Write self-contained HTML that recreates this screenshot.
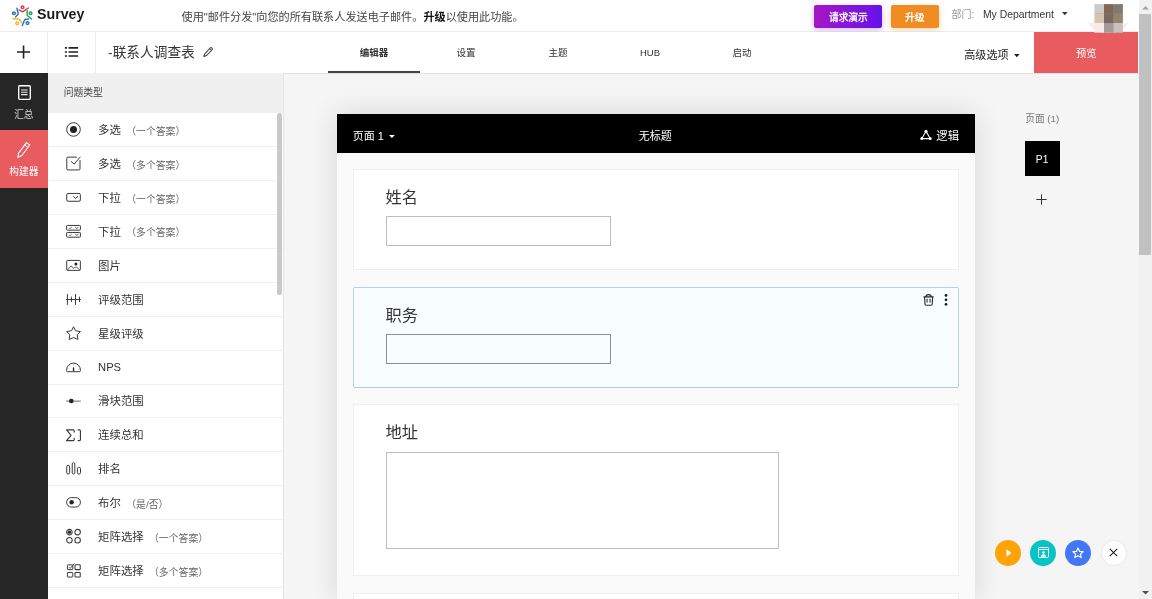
<!DOCTYPE html>
<html lang="zh-CN">
<head>
<meta charset="utf-8">
<title>Survey</title>
<style>
*{box-sizing:border-box;margin:0;padding:0}
html,body{width:1152px;height:599px;overflow:hidden;background:#fff}
body{will-change:transform;font-family:"Liberation Sans","Noto Sans CJK SC",sans-serif;font-size:11px;color:#333;position:relative}
.abs{position:absolute}
#top{left:0;top:0;width:1138.5px;height:31.5px;background:#fff;border-bottom:1px solid #ececec}
#brand{left:37.2px;top:5.3px;font-size:15.1px;font-weight:bold;color:#1a1a1a;line-height:18px;transform:scaleX(.94);transform-origin:0 0}
#promo{left:181.5px;top:8.7px;font-size:11.15px;color:#444;white-space:nowrap;line-height:16px}
#promo b{color:#111}
.btn{color:#fff;text-align:center;border-radius:2px;white-space:nowrap}
#demo{left:814.4px;top:4.6px;width:67.9px;-webkit-text-stroke:.3px #fff;height:23.5px;line-height:25.9px;font-size:9.7px;background:linear-gradient(90deg,#a617c5,#6513ea);box-shadow:0 2px 6px rgba(124,15,208,.3)}
#upg{left:890.5px;top:4.6px;width:48.6px;height:23.5px;line-height:25.9px;font-size:9.8px;background:#f08c22;font-weight:bold;box-shadow:0 2px 6px rgba(240,140,34,.35)}
#deptl{left:951.4px;top:7.1px;font-size:10px;color:#999;line-height:16px;white-space:nowrap}
#dept{left:982.9px;top:6.5px;font-size:10.4px;color:#333;line-height:16px;white-space:nowrap}
#bar2{left:0;top:32px;width:1138.5px;height:41.5px;background:#fff;border-bottom:1px solid #e2e2e2}
.vsep{top:32px;width:1px;height:41px;background:#ececec}
#title{left:108.1px;top:41.8px;font-size:13.7px;color:#333;line-height:22px;white-space:nowrap}
.tab{top:32px;width:92px;height:41px;line-height:41px;text-align:center;font-size:9.5px;color:#333}
.tab.on{font-weight:bold;border-bottom:2px solid #444}
#adv{left:964.2px;top:46.9px;font-size:11.1px;color:#222;line-height:16px;white-space:nowrap}
#prev{left:1034.4px;top:32px;width:103.8px;height:40.700px;line-height:43px;background:#e85c60;color:#fff;text-align:center;font-size:10.3px}
#side{left:0;top:73.300px;width:47.7px;height:526px;background:#262626}
#side .act{left:0;top:57px;width:47.7px;height:57.500px;background:#e85c60}
#side .lbl{width:47.7px;text-align:center;color:#fff;font-size:9.7px;line-height:12px}
#qt{left:47.7px;top:73.300px;width:236px;height:526px;background:#fff;border-right:1px solid #e4e4e4;overflow:hidden}
#qth{left:0;top:0;width:235px;height:39.500px;background:#f0f0f0;line-height:39px;padding-left:16px;font-size:9.8px;color:#444}
.qi{left:0;width:235px;height:33.91px;border-bottom:1px solid #efefef}
.qi .t{position:absolute;left:50.4px;top:8.9px;font-size:11.42px;line-height:16px;color:#333;white-space:nowrap}
.qi .t i{font-style:normal;font-size:9.87px;color:#666;margin-left:5.3px;position:relative;top:.5px}
.qi svg{position:absolute;left:18.300px;top:9.050px;overflow:visible}
#main{left:284px;top:74px;width:854.5px;height:525px;background:#f5f5f5}
#rp{left:1014px;top:74px;width:124.5px;height:525px;background:#f5f5f5}
#card{left:336.800px;top:113.900px;width:638.2px;height:486px;background:#fafafa;box-shadow:0 0 27px rgba(0,0,0,.125)}
#ch{left:0;top:0;width:638.2px;height:39px;background:#000;color:#fff;font-size:11px;line-height:38px;white-space:nowrap}
.q{left:16.200px;width:605.800px;background:#fff;border:1px solid #efefef}
.q .h{position:absolute;left:31.500px;font-size:16.200px;line-height:24px;color:#333}
.q .in{position:absolute;left:31.700px;border:1px solid #bdbdbd;background:#fff}
#sb{left:1138.5px;top:0;width:13.5px;height:599px;background:#f1f1f1}
#sb .th{left:.6px;top:13.800px;width:11.6px;height:241px;background:#c1c1c1}
.fab{width:26px;height:26px;border-radius:50%;top:539.800px}
</style>
</head>
<body>
<div id="top" class="abs"></div>
<svg class="abs" style="left:11px;top:3.500px" width="23" height="23" viewBox="0 0 23 23">
 <g fill="none" stroke-linecap="round" stroke-linejoin="round">
 <circle cx="11.520" cy="3.260" r="1.350" stroke="#e03c45" stroke-width="1.500"/>
 <path d="M8.120 5.760L11.520 7.770L17.280 4.010" stroke="#e03c45" stroke-width="1.450"/>
 <circle cx="19.530" cy="9.270" r="1.350" stroke="#22a355" stroke-width="1.500"/>
 <path d="M16.280 6.770Q15.600 9.800 16.280 11.520L20.540 15.030" stroke="#22a355" stroke-width="1.450"/>
 <circle cx="16.530" cy="19.030" r="1.350" stroke="#2f74c0" stroke-width="1.500"/>
 <path d="M17.530 15.030L13.780 15.530L11.270 21.540" stroke="#2f74c0" stroke-width="1.450"/>
 <circle cx="6.160" cy="19.280" r="1.350" stroke="#f5b82e" stroke-width="1.500"/>
 <path d="M2 14.780L8.270 15.280L10.520 18.530" stroke="#f5b82e" stroke-width="1.450"/>
 <circle cx="2.910" cy="9.270" r="1.350" stroke="#2f74c0" stroke-width="1.500"/>
 <path d="M5.910 4.260L7.270 10.020L4.510 13.020" stroke="#2f74c0" stroke-width="1.450"/>
 </g>
</svg>
<div id="brand" class="abs">Survey</div>
<div id="promo" class="abs">使用"邮件分发"向您的所有联系人发送电子邮件。<b>升级</b>以使用此功能。</div>
<div id="demo" class="abs btn">请求演示</div>
<div id="upg" class="abs btn">升级</div>
<div id="deptl" class="abs">部门:</div>
<div id="dept" class="abs">My Department</div>
<svg class="abs" style="left:1061.5px;top:12.200px" width="6" height="4" viewBox="0 0 6 4"><path d="M0 0h5.600L2.800 3.200z" fill="#333"/></svg>
<svg class="abs" style="left:1086px;top:0;z-index:5" width="46" height="34" viewBox="0 0 46 34">
 <path d="M2 23h40.400C38 30 32 32.700 22.200 32.700S6.500 30 2 23z" fill="#f9eded"/>
 <rect x="9.400" y="5.100" width="26.500" height="26.600" fill="#8f8279"/>
 <rect x="8.400" y="4.100" width="9.600" height="9.600" fill="#cdcbc8"/><rect x="18" y="4.100" width="9.400" height="9.600" fill="#836754"/><rect x="27.400" y="4.100" width="9.500" height="9.600" fill="#827972"/>
 <rect x="8.400" y="13.700" width="9.600" height="9.300" fill="#d4c4af"/><rect x="18" y="13.700" width="9.400" height="9.300" fill="#796960"/><rect x="27.400" y="13.700" width="9.500" height="9.300" fill="#958465"/>
 <rect x="8.400" y="23" width="9.600" height="9.700" fill="#f5ebea"/><rect x="18" y="23" width="9.400" height="9.700" fill="#a39a99"/><rect x="27.400" y="23" width="9.500" height="9.700" fill="#c9bfbf"/>
</svg>

<div id="bar2" class="abs"></div>
<div class="abs vsep" style="left:47.200px"></div>
<div class="abs vsep" style="left:95.300px"></div>
<svg class="abs" style="left:17px;top:45px" width="14" height="14" viewBox="0 0 14 14"><path d="M6.550 .4v13M0 6.950h13.100" stroke="#222" stroke-width="1.600" fill="none"/></svg>
<svg class="abs" style="left:64px;top:46px" width="15" height="12" viewBox="0 0 15 12"><path d="M4.550 1.900h9.550M4.550 6h9.550M4.550 10h9.550M.9 1.900h2.100M.9 6h2.100M.9 10h2.100" stroke="#222" stroke-width="1.650" fill="none"/></svg>
<div id="title" class="abs">-联系人调查表</div>
<svg class="abs" style="left:201px;top:45px" width="14" height="14" viewBox="0 0 14 14"><g transform="translate(6.950 7.200) rotate(43.500)" fill="none" stroke="#333" stroke-width=".95" stroke-linejoin="round"><path d="M-1.250 3.300V-4.800a.9.900 0 0 1 .9-.9h.7a.9.900 0 0 1 .9.900V3.300L0 5.900Z"/><path d="M-1.250 -3.700H1.250" stroke-width=".7"/></g></svg>
<div class="abs tab on" style="left:328px">编辑器</div>
<div class="abs tab" style="left:420px">设置</div>
<div class="abs tab" style="left:512px">主题</div>
<div class="abs tab" style="left:604px">HUB</div>
<div class="abs tab" style="left:696px">启动</div>
<div id="adv" class="abs">高级选项</div>
<svg class="abs" style="left:1014px;top:53.500px" width="6" height="4" viewBox="0 0 6 4"><path d="M0 0h5.600L2.800 3.200z" fill="#222"/></svg>
<div id="prev" class="abs">预览</div>

<div id="side" class="abs">
 <svg class="abs" style="left:17.600px;top:12px" width="13" height="15" viewBox="0 0 13 15"><rect x=".7" y=".7" width="11.600" height="13.600" rx="1" fill="none" stroke="#fff" stroke-width="1.350"/><path d="M3.050 5h6.550M3.050 7.300h6.550M3.050 9.600h6.550" stroke="#f0f0f0" stroke-width="1.050"/></svg>
 <div class="abs lbl" style="top:35.700px;color:#d6d6d6">汇总</div>
 <div class="abs act">
  <svg class="abs" style="left:13px;top:10px" width="20" height="20" viewBox="0 0 20 20"><g transform="translate(10 10.600) rotate(36.800)" fill="none" stroke="#fff" stroke-width="1.100" stroke-linejoin="round"><path d="M-2.050 4.600V-8.500h4.100V4.600L0 8.700Z"/><path d="M-2.050 -5.500H2.050" stroke-width=".9"/></g></svg>
  <div class="abs lbl" style="top:35.800px">构建器</div>
 </div>
</div>

<div id="qt" class="abs">
 <div id="qth" class="abs">问题类型</div>
<div class="abs qi" style="top:40.00px"><svg width="15" height="15" viewBox="0 0 15 15"><circle cx="7.5" cy="7.45" r="6.8" stroke="#3a3a3a" fill="none" stroke-width="1"/><circle cx="7.5" cy="7.500" r="3.500" fill="#222"/></svg><div class="t">多选<i>（一个答案）</i></div></div>
<div class="abs qi" style="top:73.91px"><svg width="15" height="15" viewBox="0 0 15 15"><path d="M10.800 1.150H2A1.200 1.200 0 0 0 .8 2.350V12.750a1.200 1.200 0 0 0 1.200 1.200H12.800a1.200 1.200 0 0 0 1.200-1.200V4.150" stroke="#3a3a3a" fill="none" stroke-width="1"/><path d="M5 5.350L8.200 8.150L14.400 .75" stroke="#3a3a3a" fill="none" stroke-width="1"/></svg><div class="t">多选<i>（多个答案）</i></div></div>
<div class="abs qi" style="top:107.82px"><svg width="15" height="15" viewBox="0 0 15 15"><rect x="0.730" y="3.440" width="13.620" height="7.810" rx="1.300" stroke="#3a3a3a" fill="none" stroke-width="1"/><path d="M7.220 6.170L9.540 8.450L12.030 6.170" stroke="#3a3a3a" fill="none" stroke-width="1"/></svg><div class="t">下拉<i>（一个答案）</i></div></div>
<div class="abs qi" style="top:141.73px"><svg width="15" height="15" viewBox="0 0 15 15"><rect x="0.600" y="1.450" width="13.830" height="4.700" rx=".7" stroke="#3a3a3a" fill="none" stroke-width="1"/><rect x="0.600" y="8.460" width="13.830" height="4.740" rx=".7" stroke="#3a3a3a" fill="none" stroke-width="1"/><path d="M3.200 4.050l.9.500L5.600 3.150M9.400 3.150l1.400 1.200 1.600-1M3.200 11.050l.9.500L5.600 10.150M9.400 10.150l1.400 1.200 1.600-1" stroke="#444" fill="none" stroke-width=".9"/></svg><div class="t">下拉<i>（多个答案）</i></div></div>
<div class="abs qi" style="top:175.64px"><svg width="15" height="15" viewBox="0 0 15 15"><rect x="0.730" y="2.420" width="13.620" height="9.940" rx=".8" stroke="#3a3a3a" fill="none" stroke-width="1"/><path d="M1.400 12.200C3 10.500 4 8.300 5 8S6.300 10 7 10.200S9.600 9 10.400 9.200S12.500 11 13.800 12.200" stroke="#3a3a3a" fill="none" stroke-width="0.9"/><circle cx="9.940" cy="5.950" r="1.500" fill="#222"/></svg><div class="t">图片</div></div>
<div class="abs qi" style="top:209.55px"><svg width="15" height="15" viewBox="0 0 15 15"><path d="M0 7.500h14.800M1.400 2.100v10.800M5.400 4.700v5.400M9.500 2.100v10.800M13.500 4.700v5.400" stroke="#3a3a3a" fill="none" stroke-width="1"/></svg><div class="t">评级范围</div></div>
<div class="abs qi" style="top:243.46px"><svg width="15" height="15" viewBox="0 0 15 15"><path d="M7.540 .8L9.500 4.700L14.430 5.600L11.200 8.700L11.830 13.420L7.540 11.500L3.210 13.420L3.850 8.700L.610 5.600L5.550 4.700Z" stroke="#3a3a3a" fill="none" stroke-width="1" stroke-linejoin="round"/></svg><div class="t">星级评级</div></div>
<div class="abs qi" style="top:277.37px"><svg width="15" height="15" viewBox="0 0 15 15"><path d="M1.600 11.700H13.400A1 1 0 0 0 14.400 10.700V10A6.900 6.900 0 0 0 .6 10V10.700A1 1 0 0 0 1.600 11.700Z" stroke="#3a3a3a" fill="none" stroke-width="1"/><path d="M7.540 7.400V11.200" stroke="#222" stroke-width="1.300" fill="none"/><path d="M7.540 4.300v.9M3.600 5.700l.7.600M11.400 5.700l-.7.600M2 9h.9M13 9h-.9" stroke="#999" stroke-width=".6" fill="none"/></svg><div class="t" style="top:8.4px;font-size:11.2px">NPS</div></div>
<div class="abs qi" style="top:311.28px"><svg width="15" height="15" viewBox="0 0 15 15"><path d="M0.200 7.100h14.600" stroke="#777" stroke-width="1.100" fill="none"/><circle cx="5.300" cy="7" r="2.300" fill="#222"/></svg><div class="t">滑块范围</div></div>
<div class="abs qi" style="top:345.19px"><svg width="15" height="15" viewBox="0 0 15 15"><path d="M8.220 4.600V2.900A1 1 0 0 0 7.200 1.870H.610L5.010 7.280L.610 12.690H7.200A1 1 0 0 0 8.220 11.700V10.100" stroke="#3a3a3a" fill="none" stroke-width="1.15" stroke-linejoin="round"/><path d="M11.630 1.870H13.400A1 1 0 0 1 14.430 2.900V11.700A1 1 0 0 1 13.400 12.690H11.630" stroke="#3a3a3a" fill="none" stroke-width="1.15"/></svg><div class="t">连续总和</div></div>
<div class="abs qi" style="top:379.10px"><svg width="15" height="15" viewBox="0 0 15 15"><rect x="0.730" y="4.360" width="2.880" height="8.620" rx="1.300" stroke="#3a3a3a" fill="none" stroke-width="1"/><rect x="6.220" y="1.760" width="2.600" height="11.220" rx="1.100" stroke="#3a3a3a" fill="none" stroke-width="1"/><rect x="11.420" y="6.370" width="3.090" height="6.610" rx="1.300" stroke="#3a3a3a" fill="none" stroke-width="1"/></svg><div class="t">排名</div></div>
<div class="abs qi" style="top:413.01px"><svg width="15" height="15" viewBox="0 0 15 15"><rect x="0.610" y="2.650" width="13.820" height="9.410" rx="4.700" stroke="#3a3a3a" fill="none" stroke-width="1"/><circle cx="5.620" cy="7.260" r="2.200" fill="#222"/></svg><div class="t">布尔<i>（是/否）</i></div></div>
<div class="abs qi" style="top:446.92px"><svg width="15" height="15" viewBox="0 0 15 15"><circle cx="3.410" cy="3.140" r="2.750" stroke="#3a3a3a" fill="none" stroke-width="1.05"/><circle cx="3.410" cy="3.140" r="1.700" fill="#222"/><circle cx="11.630" cy="3.140" r="2.750" stroke="#3a3a3a" fill="none" stroke-width="1.05"/><circle cx="3.410" cy="11.150" r="2.750" stroke="#3a3a3a" fill="none" stroke-width="1.05"/><circle cx="11.630" cy="11.150" r="2.750" stroke="#3a3a3a" fill="none" stroke-width="1.05"/></svg><div class="t">矩阵选择<i>（一个答案）</i></div></div>
<div class="abs qi" style="top:480.83px"><svg width="15" height="15" viewBox="0 0 15 15"><rect x="1.410" y="1.830" width="5.410" height="4.810" rx=".6" stroke="#3a3a3a" fill="none" stroke-width="1"/><path d="M3.010 4.230L4.210 5.430L8.420 .43" stroke="#3a3a3a" fill="none" stroke-width="0.9"/><rect x="9.020" y="1.830" width="5.210" height="4.810" rx=".6" stroke="#3a3a3a" fill="none" stroke-width="1.05"/><rect x="1.410" y="9.440" width="5.410" height="4.610" rx=".6" stroke="#3a3a3a" fill="none" stroke-width="1"/><rect x="9.020" y="9.440" width="5.210" height="4.610" rx=".6" stroke="#3a3a3a" fill="none" stroke-width="1.05"/></svg><div class="t">矩阵选择<i>（多个答案）</i></div></div>
<div class="abs qi" style="top:514.74px"><svg width="15" height="15" viewBox="0 0 15 15"></svg><div class="t"></div></div>
 <div class="abs" style="left:229.300px;top:39.500px;width:4.700px;height:182px;background:#c9c9c9;border-radius:2.500px"></div>
</div>

<div id="main" class="abs"></div>
<div id="card" class="abs">
 <div id="ch" class="abs">
  <span class="abs" style="left:16px;top:2.900px">页面 1</span>
  <svg class="abs" style="left:51.900px;top:21.100px" width="6" height="4" viewBox="0 0 6 4"><path d="M0 0h5.800L2.900 3z" fill="#fff"/></svg>
  <span class="abs" style="left:302px;top:2.900px">无标题</span>
  <svg class="abs" style="left:583.500px;top:15px" width="12" height="12" viewBox="0 0 12 12"><path d="M6 2.200L1.800 9.600h8.400z" fill="none" stroke="#fff" stroke-width="1.100"/><circle cx="6" cy="2.200" r="1.500" fill="#fff"/><circle cx="1.800" cy="9.600" r="1.500" fill="#fff"/><circle cx="10.200" cy="9.600" r="1.500" fill="#fff"/></svg>
  <span class="abs" style="left:599.500px;top:2.900px;font-size:11.400px">逻辑</span>
 </div>
 <div class="abs q" style="top:55.200px;height:101.200px"><div class="h" style="top:15px">姓名</div><div class="in" style="top:46px;width:225px;height:29.800px"></div></div>
 <div class="abs q" style="top:173.300px;height:101.200px;background:#f8feff;border-color:#b2d3dc;border-radius:2px"><div class="h" style="top:15px">职务</div><div class="in" style="top:46px;width:225px;height:29.800px;background:#f8feff;border-color:#8e8e8e"></div>
  <svg class="abs" style="left:568.800px;top:4.200px" width="11" height="15" viewBox="0 0 11 15"><path d="M.5 4.900H10.600M3 4.900C3 1.900 8.200 1.900 8.200 4.900M1.550 4.900L2 12.300a1 1 0 0 0 1 .9H8.200a1 1 0 0 0 1-.9L9.650 4.900M4.050 6.750V10.500M7.100 6.750V10.500" fill="none" stroke="#2a2a2a" stroke-width="1.100"/></svg>
  <svg class="abs" style="left:589.900px;top:5.950px" width="4" height="12" viewBox="0 0 4 12"><circle cx="2" cy="1.400" r="1.350" fill="#1a1a1a"/><circle cx="2" cy="5.850" r="1.350" fill="#1a1a1a"/><circle cx="2" cy="10.300" r="1.350" fill="#1a1a1a"/></svg>
 </div>
 <div class="abs q" style="top:290.600px;height:172px"><div class="h" style="top:15px">地址</div><div class="in" style="top:47px;width:393px;height:97px"></div></div>
 <div class="abs q" style="top:479px;height:30px"></div>
</div>
<div id="rp" class="abs"></div>

<div class="abs" style="left:1025.300px;top:111.500px;font-size:9.700px;color:#777;line-height:14px;white-space:nowrap">页面 (1)</div>
<div class="abs" style="left:1024.600px;top:140.800px;width:35px;height:35px;background:#000;color:#fff;font-size:10.200px;line-height:37px;text-align:center">P1</div>
<svg class="abs" style="left:1036px;top:194px" width="11" height="11" viewBox="0 0 11 11"><path d="M5.500 .3v10.400M.3 5.500h10.400" stroke="#333" stroke-width="1"/></svg>

<div class="abs fab" style="left:995px;background:#ffa404"><svg class="abs" style="left:9.500px;top:8px" width="8" height="10" viewBox="0 0 8 10"><path d="M1.500 1.200L6.500 5 1.500 8.800z" fill="#fff"/></svg></div>
<div class="abs fab" style="left:1030px;background:#08c3c3"><svg class="abs" style="left:7.500px;top:7.500px" width="11" height="11" viewBox="0 0 11 11"><rect x=".5" y=".5" width="10" height="10" rx="1" fill="none" stroke="#fff" stroke-width="1"/><path d="M.5 2.500h10" stroke="#fff" stroke-width="1"/><circle cx="5.500" cy="5.600" r="1.300" fill="#fff"/><path d="M3 9.800a2.500 2.500 0 0 1 5 0z" fill="#fff"/></svg></div>
<div class="abs fab" style="left:1065.300px;background:#4477f5"><svg class="abs" style="left:7px;top:7px" width="12" height="12" viewBox="0 0 12 12"><path d="M6 1l1.500 3.300 3.600.4-2.700 2.400.8 3.500L6 8.800 2.800 10.600l.8-3.500L.9 4.700l3.600-.4z" fill="none" stroke="#fff" stroke-width="1.200" stroke-linejoin="round"/></svg></div>
<div class="abs fab" style="left:1100.800px;background:#fff;border:1px solid #e9e9e9"><svg class="abs" style="left:7.500px;top:7.500px" width="9" height="9" viewBox="0 0 9 9"><path d="M.8.800l7.400 7.400M8.200.8L.8 8.200" stroke="#222" stroke-width="1.100"/></svg></div>

<div id="sb" class="abs"><div class="abs th"></div>
 <svg class="abs" style="left:3.500px;top:5.500px" width="7" height="4" viewBox="0 0 7 4"><path d="M0 3.500L3.500 0 7 3.500z" fill="#a3a3a3"/></svg>
 <svg class="abs" style="left:3.500px;top:590.500px" width="7" height="4" viewBox="0 0 7 4"><path d="M0 0h7L3.500 3.500z" fill="#505050"/></svg>
</div>
</body>
</html>
